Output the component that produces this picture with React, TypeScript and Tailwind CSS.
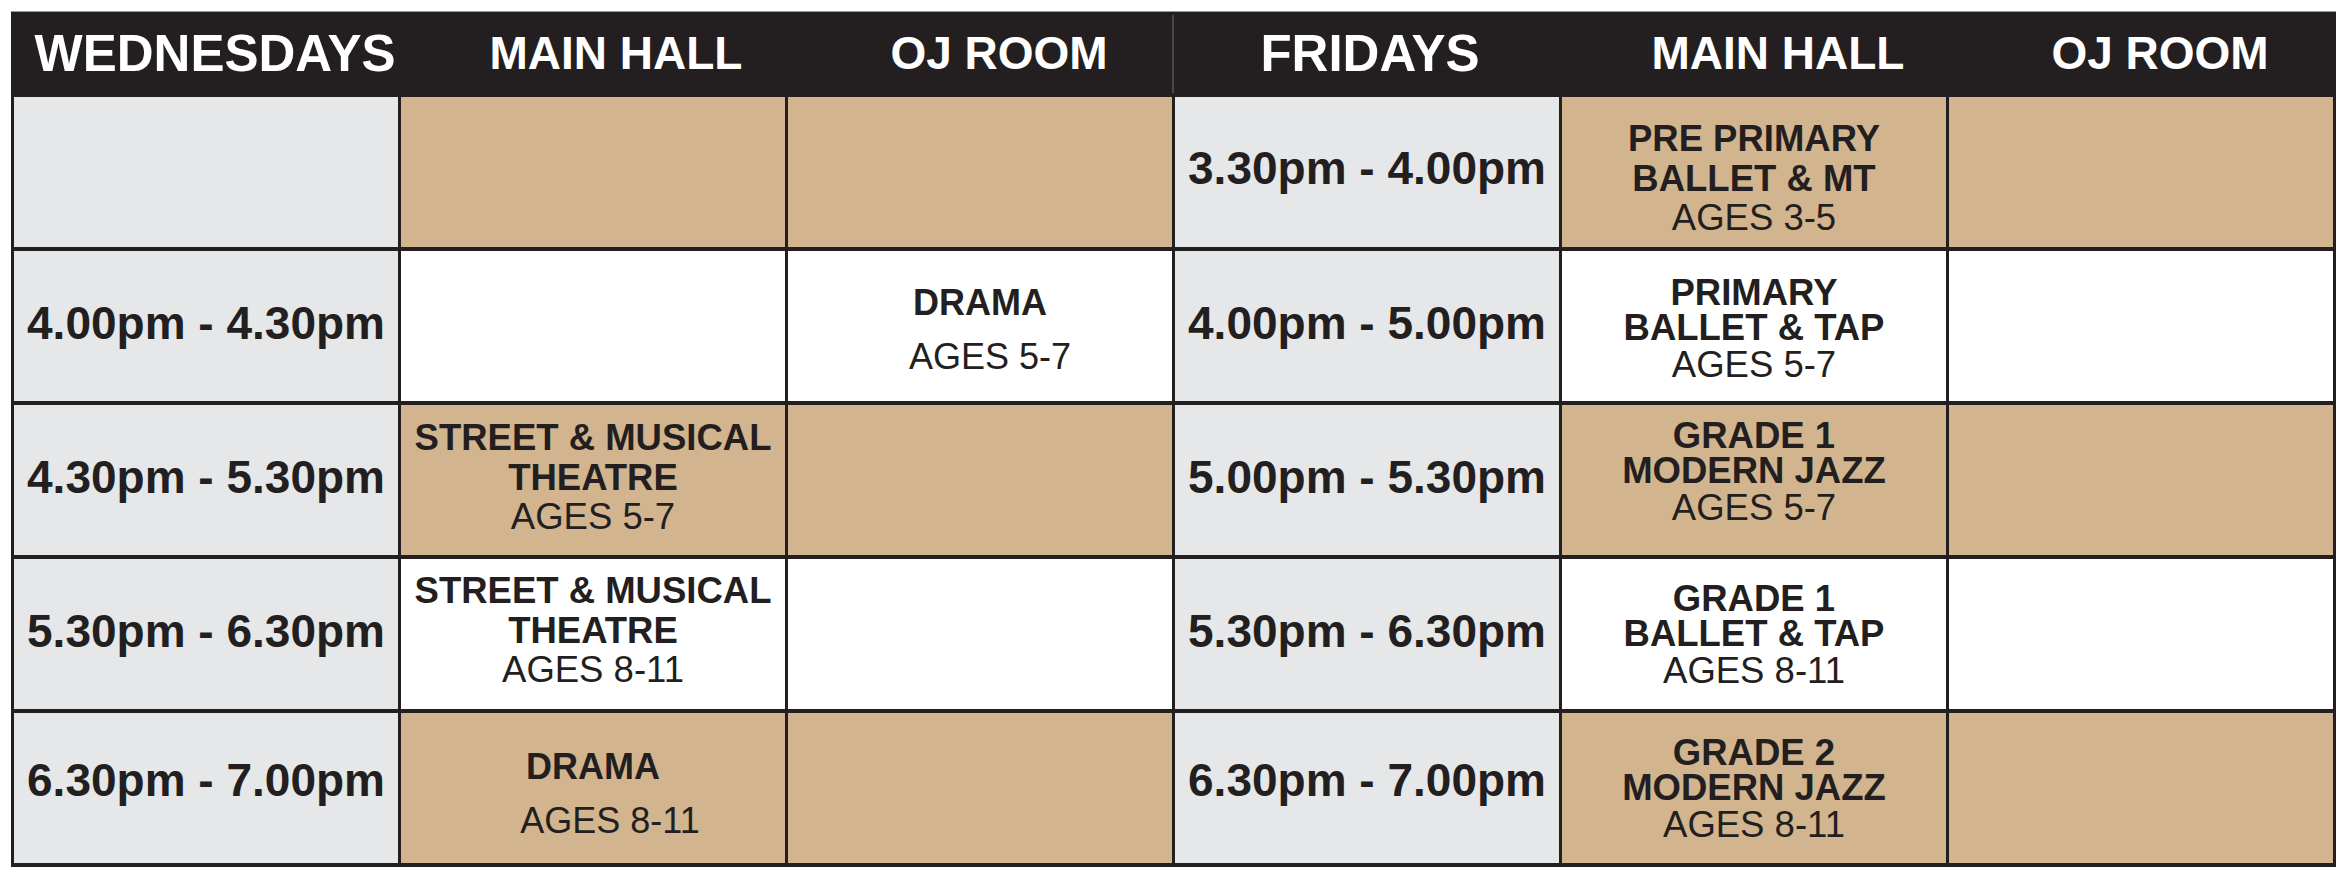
import React from 'react'

type Cell = {
  kind: 'time' | 'class' | 'drama' | 'empty'
  bg: 'gray' | 'tan' | 'white'
  time?: string
  lines?: string[]
  ages?: string
  tight?: boolean
  shift?: string
}

const bgClass = {
  gray: 'bg-[#e6e7e8]',
  tan: 'bg-[#d2b58e]',
  white: 'bg-white',
}

const header = [
  { label: 'WEDNESDAYS', day: true, pad: 'pl-[18px]' },
  { label: 'MAIN HALL', day: false, pad: 'pl-[46px]' },
  { label: 'OJ ROOM', day: false, pad: 'pl-[38px]' },
  { label: 'FRIDAYS', day: true, pad: 'pl-[6px]' },
  { label: 'MAIN HALL', day: false, pad: 'pl-[48px]' },
  { label: 'OJ ROOM', day: false, pad: 'pl-[38px]' },
]

const rows: Cell[][] = [
  [
    { kind: 'empty', bg: 'gray' },
    { kind: 'empty', bg: 'tan' },
    { kind: 'empty', bg: 'tan' },
    { kind: 'time', bg: 'gray', time: '3.30pm - 4.00pm', shift: 'pb-[9px]' },
    { kind: 'class', bg: 'tan', lines: ['PRE PRIMARY', 'BALLET & MT'], ages: 'AGES 3-5', shift: 'pt-[12px]' },
    { kind: 'empty', bg: 'tan' },
  ],
  [
    { kind: 'time', bg: 'gray', time: '4.00pm - 4.30pm', shift: 'pb-[7px]' },
    { kind: 'empty', bg: 'white' },
    { kind: 'drama', bg: 'white', lines: ['DRAMA'], ages: 'AGES 5-7', shift: 'pt-[8px] ml-[20px]' },
    { kind: 'time', bg: 'gray', time: '4.00pm - 5.00pm', shift: 'pb-[7px]' },
    { kind: 'class', bg: 'white', lines: ['PRIMARY', 'BALLET & TAP'], ages: 'AGES 5-7', tight: true, shift: 'pt-[4px]' },
    { kind: 'empty', bg: 'white' },
  ],
  [
    { kind: 'time', bg: 'gray', time: '4.30pm - 5.30pm', shift: 'pb-[6px]' },
    { kind: 'class', bg: 'tan', lines: ['STREET & MUSICAL', 'THEATRE'], ages: 'AGES 5-7', shift: 'pb-[5px]' },
    { kind: 'empty', bg: 'tan' },
    { kind: 'time', bg: 'gray', time: '5.00pm - 5.30pm', shift: 'pb-[6px]' },
    { kind: 'class', bg: 'tan', lines: ['GRADE 1', 'MODERN JAZZ'], ages: 'AGES 5-7', tight: true, shift: 'pb-[18px]' },
    { kind: 'empty', bg: 'tan' },
  ],
  [
    { kind: 'time', bg: 'gray', time: '5.30pm - 6.30pm', shift: 'pb-[6px]' },
    { kind: 'class', bg: 'white', lines: ['STREET & MUSICAL', 'THEATRE'], ages: 'AGES 8-11', shift: 'pb-[8px]' },
    { kind: 'empty', bg: 'white' },
    { kind: 'time', bg: 'gray', time: '5.30pm - 6.30pm', shift: 'pb-[6px]' },
    { kind: 'class', bg: 'white', lines: ['GRADE 1', 'BALLET & TAP'], ages: 'AGES 8-11', tight: true },
    { kind: 'empty', bg: 'white' },
  ],
  [
    { kind: 'time', bg: 'gray', time: '6.30pm - 7.00pm', shift: 'pb-[16px]' },
    { kind: 'drama', bg: 'tan', lines: ['DRAMA'], ages: 'AGES 8-11', shift: 'pt-[12px] ml-[34px]' },
    { kind: 'empty', bg: 'tan' },
    { kind: 'time', bg: 'gray', time: '6.30pm - 7.00pm', shift: 'pb-[16px]' },
    { kind: 'class', bg: 'tan', lines: ['GRADE 2', 'MODERN JAZZ'], ages: 'AGES 8-11', tight: true },
    { kind: 'empty', bg: 'tan' },
  ],
]

function ScheduleCell({ cell }: { cell: Cell }) {
  const base = `${bgClass[cell.bg]} flex flex-col items-center justify-center text-center text-[#231f20]`
  if (cell.kind === 'time') {
    return (
      <div className={`${base} ${cell.shift ?? ''}`}>
        <span className="text-[46px] font-bold leading-none">{cell.time}</span>
      </div>
    )
  }
  if (cell.kind === 'drama') {
    const [pad, ml] = (cell.shift ?? '').split(' ')
    return (
      <div className={`${base} ${pad}`}>
        <span className="text-[36px] font-bold leading-[36px]">{cell.lines![0]}</span>
        <span className={`text-[36px] leading-[36px] mt-[18px] ${ml}`}>{cell.ages}</span>
      </div>
    )
  }
  if (cell.kind === 'class') {
    const lead = cell.tight ? 'leading-[35px]' : 'leading-[40px]'
    return (
      <div className={`${base} ${cell.shift ?? ''}`}>
        {cell.lines!.map((l, i) => (
          <span key={i} className={`text-[36.5px] font-bold ${lead}`}>{l}</span>
        ))}
        <span className={`text-[36.5px] ${lead} ${cell.tight ? 'mt-[2px]' : '-mt-[1px]'}`}>{cell.ages}</span>
      </div>
    )
  }
  return <div className={base} />
}

export default function App() {
  return (
    <div className="w-[2346px] h-[878px] bg-white font-['Liberation_Sans',Arial,sans-serif]">
      <div className="ml-[11px] pt-[11px]">
        <div className="w-[2325px] grid grid-cols-6 grid-rows-[78px_repeat(5,150px)] gap-x-[3px] gap-y-[4px] p-[3px] pb-[4px] bg-[#231f20] border-t border-[#9a9a9a]">
          {header.map((h, i) => (
            <div
              key={i}
              className={`flex items-center justify-center ${h.pad} pb-[2px] text-white font-bold leading-none ${h.day ? 'text-[51px]' : 'text-[46px]'} ${i === 2 ? 'shadow-[2px_0_0_#4a4647]' : ''}`}
            >
              {h.label}
            </div>
          ))}
          {rows.map((row, r) =>
            row.map((cell, c) => <ScheduleCell key={`${r}-${c}`} cell={cell} />)
          )}
        </div>
      </div>
    </div>
  )
}
